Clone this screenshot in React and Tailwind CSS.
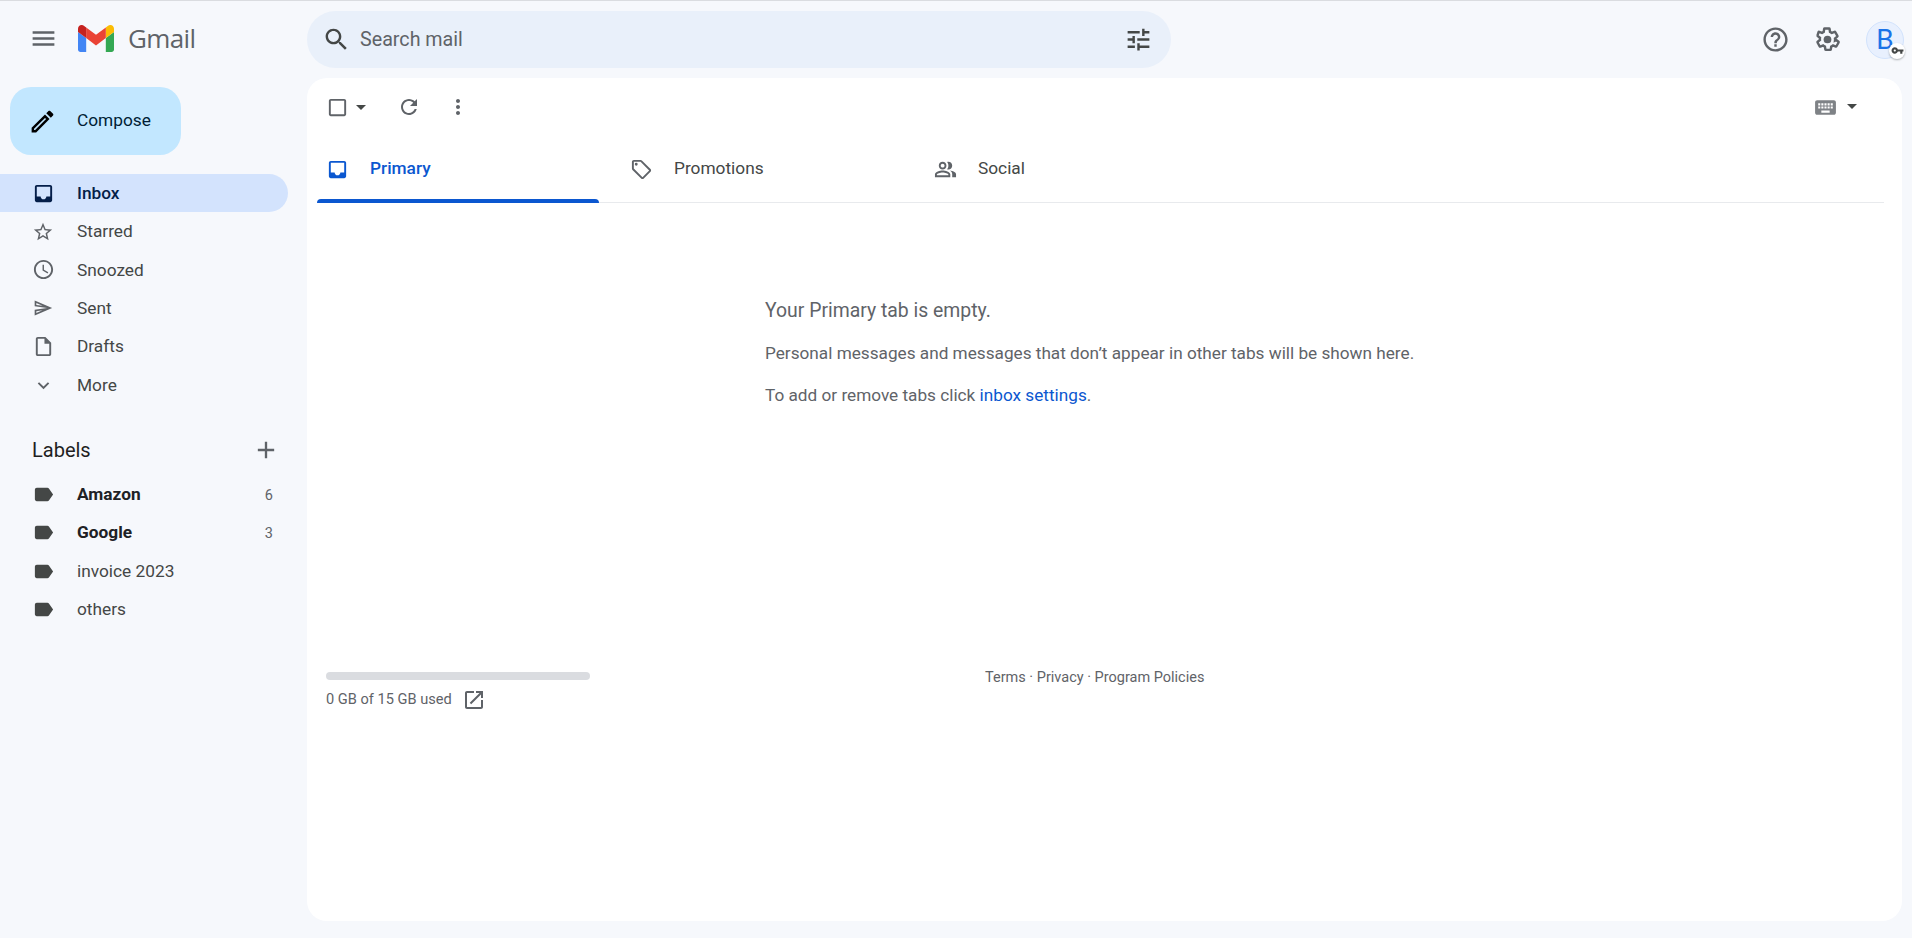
import React from "react"

const Icon = ({ d, size = 24, className = "" }) => (
    <svg viewBox="0 0 24 24" width={size} height={size} className={`shrink-0 fill-current ${className}`}>
        <path d={d} />
    </svg>
)

const paths = {
    menu: "M3 18h18v-2H3v2zm0-5h18v-2H3v2zm0-7v2h18V6H3z",
    search: "M15.5 14h-.79l-.28-.27C15.41 12.59 16 11.11 16 9.5 16 5.91 13.09 3 9.5 3S3 5.91 3 9.5 5.91 16 9.5 16c1.61 0 3.09-.59 4.23-1.57l.27.28v.79l5 4.99L20.49 19l-4.99-5zm-6 0C7.01 14 5 11.99 5 9.5S7.01 5 9.5 5 14 7.01 14 9.5 11.99 14 9.5 14z",
    tune: "M3 17v2h6v-2H3zM3 5v2h10V5H3zm10 16v-2h8v-2h-8v-2h-2v6h2zM7 9v2H3v2h4v2h2V9H7zm14 4v-2H11v2h10zm-6-4h2V7h4V5h-4V3h-2v6z",
    help: "M11 18h2v-2h-2v2zm1-16C6.48 2 2 6.48 2 12s4.48 10 10 10 10-4.48 10-10S17.52 2 12 2zm0 18c-4.41 0-8-3.59-8-8s3.59-8 8-8 8 3.59 8 8-3.59 8-8 8zm0-14c-2.21 0-4 1.79-4 4h2c0-1.1.9-2 2-2s2 .9 2 2c0 2-3 1.75-3 5h2c0-2.25 3-2.5 3-5 0-2.21-1.79-4-4-4z",
    pencil: "M3 17.25V21h3.75L17.81 9.94l-3.75-3.75L3 17.25zM5.92 19H5v-.92l9.06-9.06.92.92L5.92 19zM20.71 5.63l-2.34-2.34c-.2-.2-.45-.29-.71-.29s-.51.1-.7.29l-1.83 1.83 3.75 3.75 1.83-1.83c.39-.39.39-1.02 0-1.41z",
    inbox: "M19 3H4.99c-1.11 0-1.98.89-1.98 2L3 19c0 1.1.88 2 1.99 2H19c1.1 0 2-.9 2-2V5c0-1.11-.9-2-2-2zm0 12h-4c0 1.66-1.35 3-3 3s-3-1.34-3-3H4.99V5H19v10z",
    star: "M22 9.24l-7.19-.62L12 2 9.19 8.63 2 9.24l5.46 4.73L5.82 21 12 17.27 18.18 21l-1.63-7.03L22 9.24zM12 15.4l-3.76 2.27 1-4.28-3.32-2.88 4.38-.38L12 6.1l1.71 4.04 4.38.38-3.32 2.88 1 4.28L12 15.4z",
    clock: "M11.99 2C6.47 2 2 6.48 2 12s4.47 10 9.99 10C17.52 22 22 17.52 22 12S17.52 2 11.99 2zM12 20c-4.42 0-8-3.58-8-8s3.58-8 8-8 8 3.58 8 8-3.58 8-8 8zm.5-13H11v6l5.25 3.15.75-1.23-4.5-2.67z",
    send: "M4.01 6.03l7.51 3.22-7.52-1 .01-2.22m7.5 8.72L4 17.97v-2.22l7.51-1M2.01 3L2 10l15 2-15 2 .01 7L23 12 2.01 3z",
    draft: "M14 2H6c-1.1 0-1.99.9-1.99 2L4 20c0 1.1.89 2 1.99 2H18c1.1 0 2-.9 2-2V8l-6-6zM6 20V4h7v5h5v11H6z",
    more: "M16.59 8.59L12 13.17 7.41 8.59 6 10l6 6 6-6z",
    plus: "M19 13h-6v6h-2v-6H5v-2h6V5h2v6h6v2z",
    label: "M17.63 5.84C17.27 5.33 16.67 5 16 5L5 5.01C3.9 5.01 3 5.9 3 7v10c0 1.1.9 1.99 2 1.99L16 19c.67 0 1.27-.33 1.63-.84L22 12l-4.37-6.16z",
    check: "M19 5v14H5V5h14m0-2H5c-1.1 0-2 .9-2 2v14c0 1.1.9 2 2 2h14c1.1 0 2-.9 2-2V5c0-1.1-.9-2-2-2z",
    refresh: "M17.65 6.35C16.2 4.9 14.21 4 12 4c-4.42 0-7.99 3.58-7.99 8s3.57 8 7.99 8c3.73 0 6.84-2.55 7.73-6h-2.08c-.82 2.33-3.04 4-5.65 4-3.31 0-6-2.69-6-6s2.69-6 6-6c1.66 0 3.14.69 4.22 1.78L13 11h7V4l-2.35 2.35z",
    dots: "M12 8c1.1 0 2-.9 2-2s-.9-2-2-2-2 .9-2 2 .9 2 2 2zm0 2c-1.1 0-2 .9-2 2s.9 2 2 2 2-.9 2-2-.9-2-2-2zm0 6c-1.1 0-2 .9-2 2s.9 2 2 2 2-.9 2-2-.9-2-2-2z",
    caret: "M7 10l5 5 5-5z",
    keyboard: "M20 5H4c-1.1 0-1.99.9-1.99 2L2 17c0 1.1.9 2 2 2h16c1.1 0 2-.9 2-2V7c0-1.1-.9-2-2-2zm-9 3h2v2h-2V8zm0 3h2v2h-2v-2zM8 8h2v2H8V8zm0 3h2v2H8v-2zm-1 2H5v-2h2v2zm0-3H5V8h2v2zm9 7H8v-2h8v2zm0-4h-2v-2h2v2zm0-3h-2V8h2v2zm3 3h-2v-2h2v2zm0-3h-2V8h2v2z",
    tag: "M21.41 11.58l-9-9C12.05 2.22 11.55 2 11 2H4c-1.1 0-2 .9-2 2v7c0 .55.22 1.05.59 1.42l9 9c.36.36.86.58 1.41.58s1.05-.22 1.41-.59l7-7c.37-.36.59-.86.59-1.41s-.23-1.06-.59-1.42zM13 20.01L4 11V4h7v-.01l9 9-7 7.02zM6.5 5A1.5 1.5 0 1 0 6.5 8 1.5 1.5 0 1 0 6.5 5z",
    people: "M16.67 13.13C18.04 14.06 19 15.32 19 17v3h4v-3c0-2.18-3.57-3.47-6.33-3.87zM15 12c2.21 0 4-1.79 4-4s-1.79-4-4-4c-.47 0-.91.1-1.33.24C14.5 5.27 15 6.58 15 8s-.5 2.73-1.33 3.76c.42.14.86.24 1.33.24zM9 12c2.21 0 4-1.79 4-4s-1.79-4-4-4-4 1.79-4 4 1.79 4 4 4zm0-6c1.1 0 2 .9 2 2s-.9 2-2 2-2-.9-2-2 .9-2 2-2zM9 13c-2.67 0-8 1.34-8 4v3h16v-3c0-2.66-5.33-4-8-4zm6 5H3v-.99C3.2 16.29 6.3 15 9 15s5.8 1.29 6 2v1z",
    open: "M19 19H5V5h7V3H5c-1.11 0-2 .9-2 2v14c0 1.1.89 2 2 2h14c1.1 0 2-.9 2-2v-7h-2v7zM14 3v2h3.59l-9.83 9.83 1.41 1.41L19 6.41V10h2V3h-7z",
    key: "M12.65 10C11.83 7.67 9.61 6 7 6c-3.31 0-6 2.69-6 6s2.69 6 6 6c2.61 0 4.83-1.67 5.65-4H17v4h4v-4h2v-4H12.65zM7 14c-1.1 0-2-.9-2-2s.9-2 2-2 2 .9 2 2-.9 2-2 2z",
}

const GmailLogo = () => (
    <svg viewBox="52 42 88 66" width="36" height="27" className="shrink-0">
        <path fill="#4285f4" d="M58 108h14V74L52 59v43c0 3.32 2.69 6 6 6" />
        <path fill="#34a853" d="M120 108h14c3.32 0 6-2.69 6-6V59l-20 15" />
        <path fill="#fbbc04" d="M120 48v26l20-15v-8c0-7.42-8.47-11.65-14.4-7.2" />
        <path fill="#ea4335" d="M72 74V48l24 18 24-18v26L96 92" />
        <path fill="#c5221f" d="M52 51v8l20 15V48l-5.6-4.2c-5.94-4.45-14.4-.22-14.4 7.2" />
    </svg>
)

const GearIcon = () => (
    <svg viewBox="0 0 24 24" width="29" height="29" className="shrink-0 text-[#5f6368]">
        <path
            className="fill-none stroke-current"
            strokeWidth="2"
            d="M18.2 12.9c.03-.3.05-.6.05-.9s-.02-.6-.06-.9l1.9-1.5c.17-.13.22-.39.11-.58l-1.8-3.13c-.11-.2-.35-.27-.55-.2l-2.25.9c-.47-.36-.97-.66-1.52-.89l-.34-2.39c-.04-.23-.22-.39-.45-.39h-3.62c-.23 0-.4.16-.44.39l-.34 2.39c-.55.23-1.06.54-1.52.89l-2.25-.9c-.21-.08-.44 0-.55.2L3.77 8.52c-.11.2-.08.44.11.58l1.9 1.5c-.05.28-.08.59-.08.9s.02.6.07.9l-1.9 1.5c-.17.13-.22.39-.11.58l1.8 3.13c.11.2.35.27.55.2l2.25-.9c.47.36.97.66 1.52.89l.34 2.39c.05.23.22.39.45.39h3.62c.23 0 .41-.16.44-.39l.34-2.39c.55-.23 1.06-.53 1.52-.89l2.25.9c.21.08.44 0 .55-.2l1.8-3.13c.11-.2.07-.44-.11-.58l-1.89-1.5z"
        />
        <circle cx="12" cy="12" r="3.2" className="fill-current" />
    </svg>
)

const navItems = [
    { name: "Inbox", icon: paths.inbox, active: true },
    { name: "Starred", icon: paths.star, size: 22 },
    { name: "Snoozed", icon: paths.clock },
    { name: "Sent", icon: paths.send, size: 20 },
    { name: "Drafts", icon: paths.draft },
    { name: "More", icon: paths.more },
]

const labels = [
    { name: "Amazon", count: 6, bold: true },
    { name: "Google", count: 3, bold: true },
    { name: "invoice 2023" },
    { name: "others" },
]

const tabs = [
    { name: "Primary", icon: paths.inbox, active: true },
    { name: "Promotions", icon: paths.tag },
    { name: "Social", icon: paths.people },
]

export default function App() {
    return (
        <div className="flex h-[938px] w-full flex-col overflow-hidden border-t border-[#dadce0] bg-[#f6f8fc] font-['Roboto',sans-serif] text-[#444746]">
            <header className="flex h-[77px] shrink-0 items-center">
                <div className="flex w-[307px] shrink-0 items-center pb-[3px]">
                    <Icon d={paths.menu} size={29} className="ml-[29px] text-[#5f6368]" />
                    <div className="ml-[20px]"><GmailLogo /></div>
                    <span className="ml-[14px] font-['Open_Sans',sans-serif] text-[26px] leading-none tracking-[-0.6px] text-[#5f6368]">Gmail</span>
                </div>
                <div className="flex h-[57px] w-[864px] items-center rounded-full bg-[#e9f0fa] pr-[18px] pl-[15px]">
                    <Icon d={paths.search} size={29} className="text-[#444746]" />
                    <span className="ml-[9px] text-[19.7px] text-[#5f6368]">Search mail</span>
                    <Icon d={paths.tune} size={29} className="ml-auto text-[#444746]" />
                </div>
                <div className="ml-auto flex items-center pr-[8px]">
                    <Icon d={paths.help} size={29} className="text-[#5f6368]" />
                    <div className="ml-[23px]"><GearIcon /></div>
                    <div className="relative ml-[24px] flex h-[38px] w-[38px] items-center justify-center rounded-full border border-[#d2e3fc] bg-[#e8f0fe] text-[28px] text-[#1a73e8]">
                        B
                        <div className="absolute -right-[2px] -bottom-[1px] flex h-[16px] w-[16px] items-center justify-center rounded-full bg-white shadow-[0_1px_2px_rgba(60,64,67,0.4)]">
                            <Icon d={paths.key} size={13} className="text-[#444746]" />
                        </div>
                    </div>
                </div>
            </header>

            <div className="flex min-h-0 flex-1 pb-[17px]">
                <aside className="w-[307px] shrink-0 pt-[9px]">
                    <button className="ml-[10px] flex h-[68px] w-[171px] items-center rounded-[21px] bg-[#c2e7ff] pl-[18px] text-[17.3px] text-[#001d35]">
                        <Icon d={paths.pencil} size={29} className="text-black" />
                        <span className="ml-[20px]">Compose</span>
                    </button>
                    <nav className="mt-[19px]">
                        {navItems.map((v) => (
                            <div
                                key={v.name}
                                className={`flex h-[38.4px] w-[288px] items-center rounded-r-full pl-[31px] text-[17.3px] ${v.active ? "bg-[#d3e3fd] font-medium text-[#041e49]" : ""}`}
                            >
                                <div className="flex w-[24px] justify-center">
                                    <Icon d={v.icon} size={v.size || 23} className={v.active ? "text-[#041e49]" : "text-[#5f6368]"} />
                                </div>
                                <span className="ml-[22px] pt-[1px]">{v.name}</span>
                            </div>
                        ))}
                    </nav>
                    <div className="mt-[27px] flex h-[38px] w-[288px] items-center justify-between pr-[8px] pl-[32px]">
                        <span className="text-[20px] text-[#1f1f1f]">Labels</span>
                        <Icon d={paths.plus} size={28} className="text-[#5f6368]" />
                    </div>
                    <div className="pt-[6px]">
                        {labels.map((v) => (
                            <div key={v.name} className="flex h-[38.4px] w-[288px] items-center pr-[15px] pl-[31px] text-[17.3px]">
                                <div className="flex w-[24px] justify-center">
                                    <Icon d={paths.label} size={23} className="text-[#444746]" />
                                </div>
                                <span className={`ml-[22px] pt-[1px] ${v.bold ? "font-bold text-[#202124]" : ""}`}>{v.name}</span>
                                {v.count && <span className="ml-auto pt-[2px] text-[14.5px] text-[#5f6368]">{v.count}</span>}
                            </div>
                        ))}
                    </div>
                </aside>

                <main className="mr-[10px] flex min-w-0 flex-1 flex-col rounded-[20px] bg-white">
                    <div className="flex h-[58px] shrink-0 items-center pl-[19px] text-[#5f6368]">
                        <Icon d={paths.check} size={23} />
                        <Icon d={paths.caret} size={24} className="text-[#444746]" />
                        <Icon d={paths.refresh} size={24} className="ml-[24px]" />
                        <Icon d={paths.dots} size={24} className="ml-[25px]" />
                        <div className="mr-[38px] ml-auto flex items-center">
                            <Icon d={paths.keyboard} size={25} className="opacity-80" />
                            <Icon d={paths.caret} size={24} className="ml-[2px] -mt-[2px] text-[#444746]" />
                        </div>
                    </div>

                    <div className="relative mr-[18px] ml-[10px] flex h-[67px] shrink-0 border-b border-[#e8eaed]">
                        {tabs.map((v) => (
                            <div key={v.name} className={`relative flex h-full w-[304px] items-center pl-[9px] text-[17.3px] ${v.active ? "text-[#0b57d0]" : "text-[#444746]"}`}>
                                <Icon d={v.icon} size={23} className={v.active ? "text-[#0b57d0]" : "text-[#5f6368]"} />
                                <span className={`ml-[21px] ${v.active ? "font-medium" : ""}`}>{v.name}</span>
                                {v.active && <div className="absolute bottom-[-1px] left-0 h-[4px] w-[282px] rounded-t-[4px] bg-[#0b57d0]" />}
                            </div>
                        ))}
                    </div>

                    <div className="ml-[458px] pt-[96px] text-[#5f6368]">
                        <p className="text-[19.4px] leading-[24px]">Your Primary tab is empty.</p>
                        <p className="mt-[19px] text-[17.2px] leading-[22px]">Personal messages and messages that don’t appear in other tabs will be shown here.</p>
                        <p className="mt-[20px] text-[17.2px] leading-[22px]">To add or remove tabs click <span className="text-[#0b57d0]">inbox settings</span>.</p>
                    </div>

                    <div className="mt-[266px] flex pl-[19px]">
                        <div className="w-[264px] shrink-0">
                            <div className="h-[8px] rounded-full bg-[#dadce0]" />
                            <div className="mt-[8px] flex items-center text-[14.6px] text-[#5f6368]">
                                0 GB of 15 GB used
                                <Icon d={paths.open} size={24} className="ml-[10px]" />
                            </div>
                        </div>
                        <div className="-mt-[5px] ml-[395px] text-[14.5px] text-[#5f6368]">Terms · Privacy · Program Policies</div>
                    </div>
                </main>
            </div>
        </div>
    )
}
